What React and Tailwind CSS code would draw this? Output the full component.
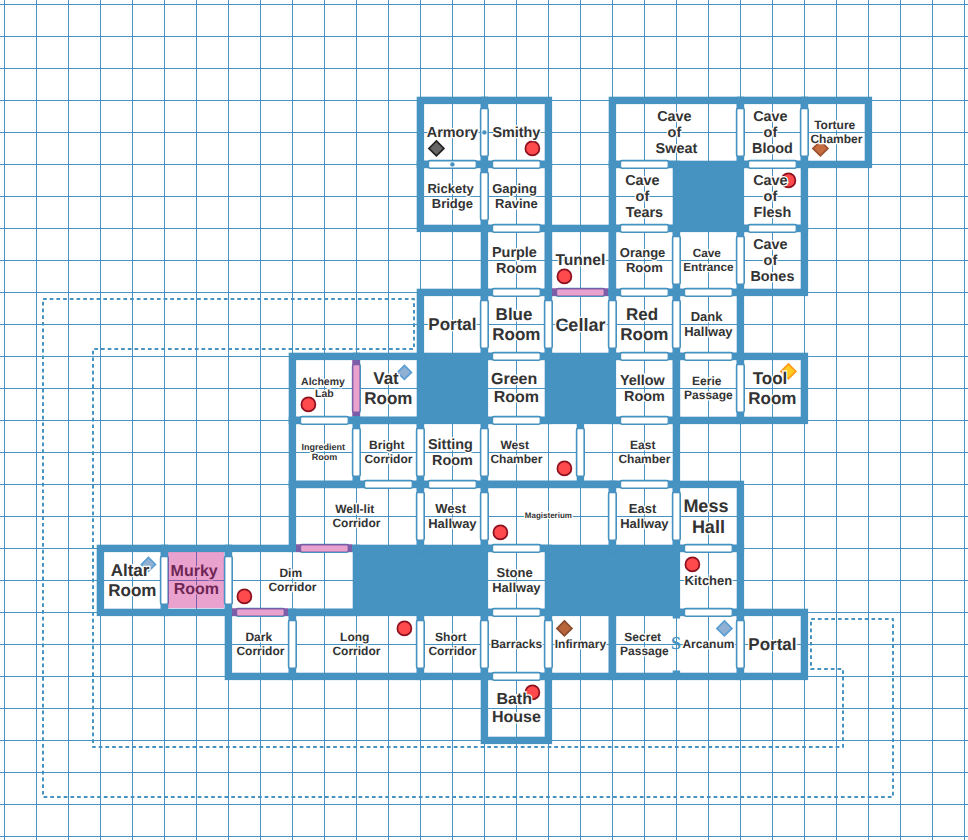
import React from "react";

const BLUE = "#4692c0";

// cell helpers: the dungeon sits on a 64px grid starting at 100,100
const X = (c) => 100 + 64 * c;
const Y = (r) => 100 + 64 * r;

// [col, row, colSpan, rowSpan]
const rooms = [
  [5, 0, 1, 1], [6, 0, 1, 1], [8, 0, 2, 1], [10, 0, 1, 1], [11, 0, 1, 1],
  [5, 1, 1, 1], [6, 1, 1, 1], [8, 1, 1, 1], [10, 1, 1, 1],
  [6, 2, 1, 1], [7, 2, 1, 1], [8, 2, 1, 1], [9, 2, 1, 1], [10, 2, 1, 1],
  [5, 3, 1, 1], [6, 3, 1, 1], [7, 3, 1, 1], [8, 3, 1, 1], [9, 3, 1, 1],
  [3, 4, 1, 1], [4, 4, 1, 1], [6, 4, 1, 1], [8, 4, 1, 1], [9, 4, 1, 1], [10, 4, 1, 1],
  [3, 5, 1, 1], [4, 5, 1, 1], [5, 5, 1, 1], [6, 5, 3, 1],
  [3, 6, 2, 1], [5, 6, 1, 1], [6, 6, 2, 1], [8, 6, 1, 1], [9, 6, 1, 1],
  [0, 7, 1, 1], [1, 7, 1, 1], [2, 7, 2, 1], [6, 7, 1, 1], [9, 7, 1, 1],
  [2, 8, 1, 1], [3, 8, 2, 1], [5, 8, 1, 1], [6, 8, 1, 1], [7, 8, 1, 1], [8, 8, 2, 1], [10, 8, 1, 1],
  [6, 9, 1, 1],
];

const solids = [
  [9, 1, 1, 1], [5, 4, 1, 1], [7, 4, 1, 1], [4, 7, 2, 1], [7, 7, 2, 1],
];

// vertical doors: [x of wall, y of cell top]
const vDoors = [
  [484, 100], [740, 100], [804, 100], [484, 164],
  [676, 228], [740, 228],
  [484, 292], [548, 292], [612, 292], [676, 292],
  [356, 356], [740, 356],
  [356, 420], [420, 420], [484, 420], [580, 420],
  [420, 484], [484, 484], [612, 484], [676, 484],
  [164, 548], [228, 548],
  [292, 612], [420, 612], [484, 612], [548, 612], [740, 612],
];

// horizontal doors: [x of cell left, y of wall]
const hDoors = [
  [420, 164], [484, 164], [612, 164], [740, 164],
  [484, 228], [612, 228], [740, 228],
  [484, 292], [548, 292], [612, 292], [676, 292],
  [484, 356], [612, 356], [676, 356],
  [292, 420], [484, 420], [612, 420],
  [356, 484], [420, 484], [612, 484],
  [292, 548], [484, 548], [676, 548],
  [228, 612], [484, 612], [676, 612],
  [484, 676],
];

const circles = [
  [532, 148], [788, 180], [564, 276], [308, 404], [564, 468],
  [500, 532], [692, 564], [244, 596], [404, 628], [532, 692],
];

const diamonds = [
  { x: 436, y: 148, r: 7.5, fill: "#666666", stroke: "#222222" },
  { x: 404, y: 372, r: 7, fill: "#8fb0d3", stroke: "#5a9fd4" },
  { x: 788, y: 371, r: 7.5, fill: "#ffcb1e", stroke: "#ff9a1f" },
  { x: 148, y: 564, r: 7, fill: "#8fb0d3", stroke: "#5a9fd4" },
  { x: 724, y: 628, r: 7.5, fill: "#8fb0d3", stroke: "#5a9fd4" },
  { x: 564, y: 628, r: 7.5, fill: "#b8653c", stroke: "#8a4a2c" },
  { x: 820, y: 148, r: 7.5, fill: "#c66c3e", stroke: "#9c5030" },
];

const T8 = "text-[8px] leading-[10px]";
const T9 = "text-[9px] leading-[10px]";
const T10 = "text-[10.5px] leading-[12px]";
const T12 = "text-[12px] leading-[14px]";
const T13 = "text-[13px] leading-[15px]";
const T14 = "text-[14.4px] leading-[16px] pt-[2px]";
const T16 = "text-[16px] leading-[18px] pt-[2px]";
const T17 = "text-[17px] leading-[20px] pt-[2px]";
const T18 = "text-[18px] leading-[21px] pt-[2px]";

const labels = [
  ["Armory", 452, 132, T14],
  ["Smithy", 516, 132, T14],
  ["Cave \nof \nSweat", 676, 132, T14],
  ["Cave \nof \nBlood", 772, 132, T14],
  ["Torture \nChamber", 836, 132, T12],
  ["Rickety \nBridge", 452, 196, T13],
  ["Gaping \nRavine", 516, 196, T13],
  ["Cave \nof \nTears", 644, 196, T14],
  ["Cave \nof \nFlesh", 772, 196, T14],
  ["Purple \nRoom", 516, 260, T14],
  ["Tunnel", 580, 260, "text-[15.6px] leading-[18px] pt-[2px]"],
  ["Orange \nRoom", 644, 260, T13],
  ["Cave \nEntrance", 708, 260, "text-[11.8px] leading-[14px]"],
  ["Cave \nof \nBones", 772, 260, T14],
  ["Portal", 452, 324, T17],
  ["Blue \nRoom", 516, 324, T17],
  ["Cellar", 580, 324, T18],
  ["Red \nRoom", 644, 324, T17],
  ["Dank \nHallway", 708, 324, T13],
  ["Alchemy \nLab", 324, 388, T10],
  ["Vat \nRoom", 388, 388, T17],
  ["Green \nRoom", 516, 388, T16],
  ["Yellow \nRoom", 644, 388, T14],
  ["Eerie \nPassage", 708, 388, T12],
  ["Tool \nRoom", 772, 388, T17],
  ["Ingredient \nRoom", 324, 452, T9],
  ["Bright \nCorridor", 388, 452, T12],
  ["Sitting \nRoom", 452, 452, T14],
  ["West \nChamber", 516, 452, T12],
  ["East \nChamber", 644, 452, T12],
  ["Well-lit \nCorridor", 356, 516, T12],
  ["West \nHallway", 452, 516, T13],
  ["Magisterium", 548, 516, T8],
  ["East \nHallway", 644, 516, T13],
  ["Mess \nHall", 708, 516, T18],
  ["Altar \nRoom", 132, 580, T17],
  ["Murky \nRoom", 196, 580, T16],
  ["Dim \nCorridor", 292, 580, T12],
  ["Stone \nHallway", 516, 580, T13],
  ["Kitchen", 708, 580, T13],
  ["Dark \nCorridor", 260, 644, T12],
  ["Long \nCorridor", 356, 644, T12],
  ["Short \nCorridor", 452, 644, T12],
  ["Barracks", 516, 644, T12],
  ["Infirmary", 580, 644, T12],
  ["Secret \nPassage", 644, 644, T12],
  ["Arcanum", 708, 644, T12],
  ["Portal", 772, 644, T17],
  ["Bath \nHouse", 516, 708, T16],
];

// the tinted bits sit over the rooms and their text
const tints = [
  { x: 168, y: 552, w: 56, h: 56 },
  { x: 552, y: 288, w: 56, h: 8 },
  { x: 352, y: 360, w: 8, h: 56 },
  { x: 296, y: 544, w: 56, h: 8 },
  { x: 232, y: 608, w: 56, h: 8 },
];

function MapDrawing() {
  return (
    <svg className="absolute inset-0" width="968" height="840" viewBox="0 0 968 840">
      <path
        d="M43 299H414V349H93V747H843V669H811V619H893V797H43Z"
        fill="none"
        stroke={BLUE}
        strokeWidth="2"
        strokeDasharray="3.7 3"
        strokeLinejoin="round"
      />
      <g transform="translate(0.4 0.4)">
        {solids.map(([c, r, w, h]) => (
          <rect key={`${c}-${r}`} x={X(c)} y={Y(r)} width={w * 64} height={h * 64} fill={BLUE} />
        ))}
        {rooms.map(([c, r, w, h]) => (
          <rect
            key={`${c}-${r}`}
            x={X(c)}
            y={Y(r)}
            width={w * 64}
            height={h * 64}
            fill="none"
            stroke={BLUE}
            strokeWidth="7.4"
            strokeLinecap="square"
          />
        ))}
        {/* wall stubs either side of the two open splits */}
        <path d="M580 420V484M676 612V618M676 670V676" stroke={BLUE} strokeWidth="7.4" fill="none" />
        {vDoors.map(([x, y]) => (
          <rect key={`v${x}-${y}`} x={x - 3.8} y={y + 8} width="7.6" height="48" rx="1.6" fill="white" stroke={BLUE} strokeWidth="1.6" />
        ))}
        {hDoors.map(([x, y]) => (
          <rect key={`h${x}-${y}`} x={x + 8} y={y - 3.8} width="48" height="7.6" rx="1.6" fill="white" stroke={BLUE} strokeWidth="1.6" />
        ))}
        <circle cx="484" cy="132" r="2.2" fill={BLUE} />
        <circle cx="452" cy="164" r="2.2" fill={BLUE} />
        {circles.map(([x, y]) => (
          <circle key={`${x}-${y}`} cx={x} cy={y} r="7" fill="#ff4a4d" stroke="#8c0f1e" strokeWidth="1.7" />
        ))}
        {diamonds.map((d) => (
          <polygon
            key={`${d.x}-${d.y}`}
            points={`${d.x},${d.y - d.r} ${d.x + d.r},${d.y} ${d.x},${d.y + d.r} ${d.x - d.r},${d.y}`}
            fill={d.fill}
            stroke={d.stroke}
            strokeWidth="1.7"
          />
        ))}
      </g>
    </svg>
  );
}

export default function App() {
  return (
    <div className="relative w-[968px] h-[840px] overflow-hidden bg-white bg-[linear-gradient(#4692c0_1px,transparent_1px),linear-gradient(90deg,#4692c0_1px,transparent_1px)] bg-[size:32px_32px] bg-[position:4px_4px] font-['Liberation_Sans',Arial,sans-serif] [text-rendering:geometricPrecision]">
      <MapDrawing />
      {labels.map(([text, x, y, size]) => (
        <div
          key={`${text}-${x}-${y}`}
          className={`absolute -translate-x-1/2 -translate-y-1/2 whitespace-pre text-center font-bold text-[#333333] [-webkit-text-stroke:2.5px_white] [paint-order:stroke_fill] ${size}`}
          style={{ left: x + 0.4, top: y + 0.4 }}
        >
          {text}
        </div>
      ))}
      <span className="absolute left-[671px] top-[633px] font-['Liberation_Serif',serif] text-[18px] leading-[20px] font-bold text-[#4692c0]">
        S
      </span>
      {tints.map((t) => (
        <div
          key={`${t.x}-${t.y}`}
          className="absolute bg-[#c71585]/40"
          style={{ left: t.x + 0.4, top: t.y + 0.4, width: t.w, height: t.h }}
        />
      ))}
    </div>
  );
}
